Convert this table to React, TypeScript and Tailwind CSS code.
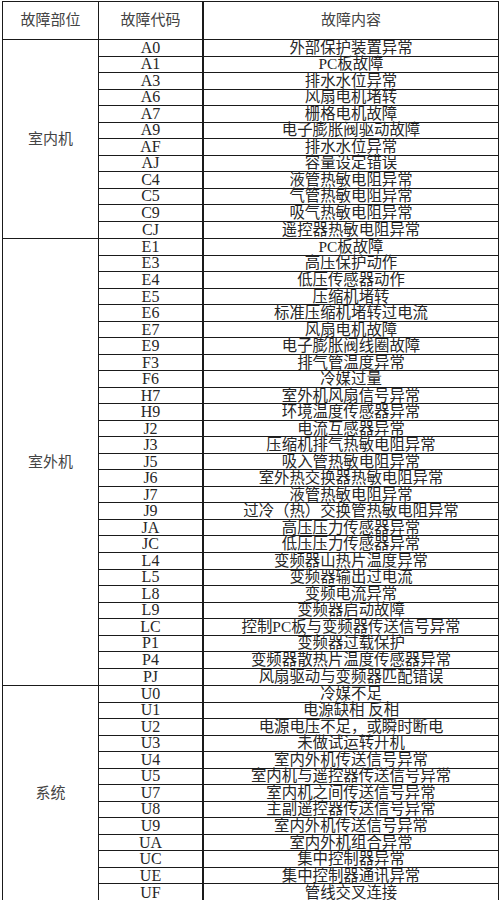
import React from 'react';

type Group = { part: string; rows: [string, string][] };

const groups: Group[] = [
  {
    part: '室内机',
    rows: [
      ['A0', '外部保护装置异常'],
      ['A1', 'PC板故障'],
      ['A3', '排水水位异常'],
      ['A6', '风扇电机堵转'],
      ['A7', '栅格电机故障'],
      ['A9', '电子膨胀阀驱动故障'],
      ['AF', '排水水位异常'],
      ['AJ', '容量设定错误'],
      ['C4', '液管热敏电阻异常'],
      ['C5', '气管热敏电阻异常'],
      ['C9', '吸气热敏电阻异常'],
      ['CJ', '遥控器热敏电阻异常'],
    ],
  },
  {
    part: '室外机',
    rows: [
      ['E1', 'PC板故障'],
      ['E3', '高压保护动作'],
      ['E4', '低压传感器动作'],
      ['E5', '压缩机堵转'],
      ['E6', '标准压缩机堵转过电流'],
      ['E7', '风扇电机故障'],
      ['E9', '电子膨胀阀线圈故障'],
      ['F3', '排气管温度异常'],
      ['F6', '冷媒过量'],
      ['H7', '室外机风扇信号异常'],
      ['H9', '环境温度传感器异常'],
      ['J2', '电流互感器异常'],
      ['J3', '压缩机排气热敏电阻异常'],
      ['J5', '吸入管热敏电阻异常'],
      ['J6', '室外热交换器热敏电阻异常'],
      ['J7', '液管热敏电阻异常'],
      ['J9', '过冷（热）交换管热敏电阻异常'],
      ['JA', '高压压力传感器异常'],
      ['JC', '低压压力传感器异常'],
      ['L4', '变频器山热片温度异常'],
      ['L5', '变频器输出过电流'],
      ['L8', '变频电流异常'],
      ['L9', '变频器启动故障'],
      ['LC', '控制PC板与变频器传送信号异常'],
      ['P1', '变频器过载保护'],
      ['P4', '变频器散热片温度传感器异常'],
      ['PJ', '风扇驱动与变频器匹配错误'],
    ],
  },
  {
    part: '系统',
    rows: [
      ['U0', '冷媒不足'],
      ['U1', '电源缺相 反相'],
      ['U2', '电源电压不足，或瞬时断电'],
      ['U3', '未做试运转开机'],
      ['U4', '室内外机传送信号异常'],
      ['U5', '室内机与遥控器传送信号异常'],
      ['U7', '室内机之间传送信号异常'],
      ['U8', '主副遥控器传送信号异常'],
      ['U9', '室内外机传送信号异常'],
      ['UA', '室内外机组合异常'],
      ['UC', '集中控制器异常'],
      ['UE', '集中控制器通讯异常'],
      ['UF', '管线交叉连接'],
    ],
  },
];

const font = "font-['Liberation_Serif','Noto_Sans_CJK_SC',serif]";

export default function App() {
  return (
    <div className={`w-[500px] h-[900px] bg-white pt-[1px] pl-[2px] text-[#262626] ${font}`}>
      <div className="w-[497px] border border-[#1a1a1a]">
        {/* header */}
        <div className="flex h-[38px] border-b border-[#1a1a1a] text-[15px] text-[#444]">
          <div className="w-[96px] border-r border-[#1a1a1a] flex items-center justify-center">故障部位</div>
          <div className="w-[105px] border-r-2 border-[#1a1a1a] flex items-center justify-center">故障代码</div>
          <div className="flex-1 flex items-center justify-center">故障内容</div>
        </div>

        {groups.map((g, gi) => (
          <div key={g.part} className={`flex ${gi < groups.length - 1 ? 'border-b border-[#1a1a1a]' : ''}`}>
            <div className="w-[96px] border-r border-[#1a1a1a] flex items-center justify-center text-[15px] text-[#444]">
              {g.part}
            </div>
            <div className="flex-1 flex flex-col">
              {g.rows.map(([code, text], ri) => (
                <div
                  key={code}
                  className={`flex h-[16.52px] ${ri < g.rows.length - 1 ? 'border-b-[1.5px] border-[#1a1a1a]' : ''}`}
                >
                  <div className="w-[105px] border-r-2 border-[#1a1a1a] flex items-center justify-center text-[16px] leading-[16px]">
                    {code}
                  </div>
                  <div className="flex-1 flex items-center justify-center text-[15.4px] leading-[16px] whitespace-nowrap overflow-visible">
                    {text}
                  </div>
                </div>
              ))}
            </div>
          </div>
        ))}
      </div>
    </div>
  );
}
